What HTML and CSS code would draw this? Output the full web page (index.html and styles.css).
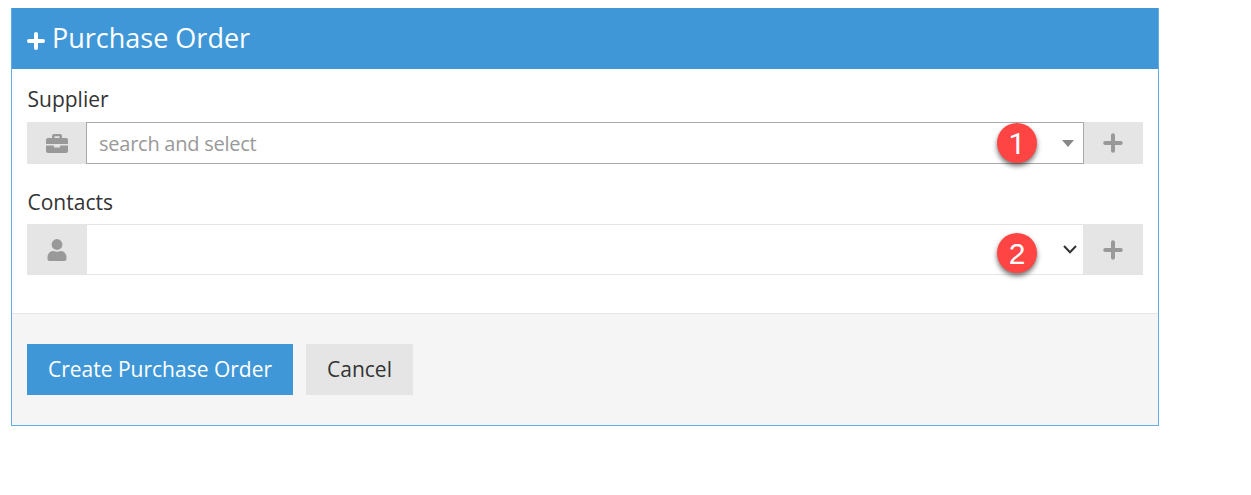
FILE: index.html
```html
<!DOCTYPE html>
<html lang="en">
<head>
    <meta charset="UTF-8">
    <title>Purchase Order</title>
    <link rel="stylesheet" href="styles.css">
</head>
<body>
    <div class="portlet">
        <div class="portlet-title">
            <svg class="title-icon" viewBox="0 0 18 18"><path d="M9 2V16M2 9H16"/></svg>
            <h1>Purchase Order</h1>
        </div>

        <form class="portlet-body">
            <div class="form-group supplier">
                <label>Supplier</label>
                <div class="input-group">
                    <span class="addon">
                        <svg class="briefcase" viewBox="0 0 22 20"><path d="M6 4V2Q6 0 8 0H14Q16 0 16 2V4H20Q22 4 22 6V10H0V6Q0 4 2 4ZM8.500 4H13.500V2.300H8.500ZM0 11.500H8V13.500H14V11.500H22V17Q22 19 20 19H2Q0 19 0 17Z"/></svg>
                    </span>
                    <div class="select">
                        <span class="placeholder">search and select</span>
                        <svg class="arrow" viewBox="0 0 12 7"><path d="M0 0H12L6 7Z"/></svg>
                        <span class="marker">1</span>
                    </div>
                    <span class="addon">
                        <svg class="plus" viewBox="0 0 20 20"><path d="M10 2.200V17.800M2.200 10H17.800"/></svg>
                    </span>
                </div>
            </div>

            <div class="form-group contacts">
                <label>Contacts</label>
                <div class="input-group">
                    <span class="addon">
                        <svg class="user" viewBox="0 0 20 22"><circle cx="10" cy="5.500" r="5.400"/><path d="M.5 18.500C.5 14.500 3 12 6.500 12C8.500 13.100 11.500 13.100 13.500 12C17 12 19.500 14.500 19.500 18.500V20Q19.500 22 17.500 22H2.500Q.5 22 .5 20Z"/></svg>
                    </span>
                    <div class="select">
                        <svg class="chevron" viewBox="0 0 14 9"><path d="M1 1L7 7.200L13 1"/></svg>
                        <span class="marker">2</span>
                    </div>
                    <span class="addon">
                        <svg class="plus" viewBox="0 0 20 20"><path d="M10 2.200V17.800M2.200 10H17.800"/></svg>
                    </span>
                </div>
            </div>
        </form>

        <div class="form-actions">
            <button class="btn blue">Create Purchase Order</button>
            <button class="btn">Cancel</button>
        </div>
    </div>
</body>
</html>
```
FILE: styles.css
```css
* {
    box-sizing: border-box;
}
body {
    margin: 0;
    padding: 8px 92px 0 11px;
    background: #fff;
    color: #333;
    font-family: "Open Sans", sans-serif;
    font-size: 21px;
}
svg {
    display: block;
}
.portlet {
    height: 418px;
    border: 1px solid #60aee4;
    border-top: 0;
    display: flex;
    flex-direction: column;
}
.portlet-title {
    height: 61px;
    padding: 0 0 2px 15px;
    background: #4097d8;
    color: #fff;
    display: flex;
    align-items: center;
}
.title-icon {
    width: 18px;
    height: 18px;
    margin: 6px 7px 0 0;
}
.title-icon path,
.plus path {
    fill: none;
    stroke: #fff;
    stroke-width: 4;
    stroke-linecap: round;
}
h1 {
    margin: 0;
    font-size: 27px;
    font-weight: 400;
    line-height: 59px;
}
.portlet-body {
    height: 244px;
    padding: 15px 15px 0;
}
.form-group label {
    display: block;
    height: 38px;
    padding-left: 0.5px;
    line-height: 31px;
}
.supplier {
    height: 102px;
}
.input-group {
    display: flex;
    height: 42px;
}
.contacts .input-group {
    height: 51px;
}
.contacts label {
    line-height: 33px;
}
.addon {
    width: 59px;
    background: #e5e5e5;
    display: flex;
    align-items: center;
    justify-content: center;
}
.supplier .addon:last-child {
    padding-right: 1px;
}
.supplier .addon:first-child {
    padding: 2px 0 0 1px;
}
.contacts .addon {
    width: 60px;
}
.briefcase {
    width: 22px;
    height: 20px;
    fill: #999;
}
.user {
    width: 20px;
    height: 22px;
    fill: #999;
}
.plus {
    width: 20px;
    height: 20px;
}
.plus path {
    stroke: #999;
}
.select {
    position: relative;
    flex: 1;
    display: flex;
    align-items: center;
    padding: 0 9px 0 12px;
    border: 1px solid #aaa;
    background: #fff;
}
.contacts .select {
    padding-right: 6px;
    border-color: #e5e5e5;
    border-width: 1px 0;
}
.placeholder {
    color: #999;
    font-size: 20px;
    letter-spacing: -0.25px;
}
.arrow {
    width: 12px;
    height: 7px;
    margin-left: auto;
    fill: #888;
}
.chevron {
    width: 14px;
    height: 9px;
    margin-left: auto;
    fill: none;
    stroke: #333;
    stroke-width: 2;
}
.marker {
    position: absolute;
    top: 0;
    right: 46px;
    width: 40px;
    height: 40px;
    border-radius: 50%;
    background: #ff4444;
    color: #fff;
    font: 30px/42px "Liberation Sans", sans-serif;
    text-align: center;
    box-shadow: 0 3px 5px rgba(0,0,0,0.55);
}
.supplier .marker {
    font-family: Roboto, sans-serif;
}
.contacts .marker {
    top: 8px;
}
.form-actions {
    flex: 1;
    padding: 30px 15px;
    border-top: 1px solid #e5e5e5;
    background: #f5f5f5;
    display: flex;
    align-items: flex-start;
    gap: 13px;
}
.btn {
    width: 107px;
    height: 51px;
    padding: 0 0 2px;
    border: 0;
    background: #e5e5e5;
    color: #333;
    font-family: inherit;
    font-size: 21px;
    cursor: pointer;
}
.btn.blue {
    width: 266px;
    background: #4097d8;
    color: #fff;
}
```
